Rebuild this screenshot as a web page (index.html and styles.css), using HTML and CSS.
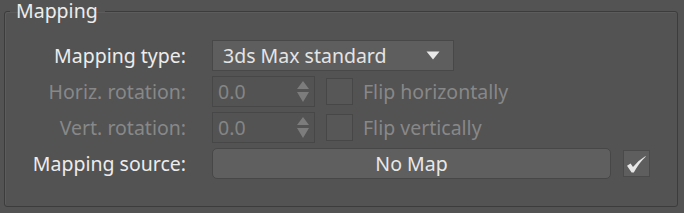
FILE: index.html
```html
<!DOCTYPE html>
<html>
<head>
<meta charset="utf-8">
<link rel="stylesheet" href="styles.css">
</head>
<body>
<fieldset class="group">
  <legend class="group-title">Mapping</legend>
  <div class="form">
    <div class="label">Mapping type:</div>
    <div class="row">
      <div class="dropdown">
        <span class="dropdown-text">3ds Max standard</span>
        <svg class="dropdown-arrow" width="14" height="9" viewBox="0 0 14 9"><path d="M0.5 0.5 H13.5 L7 8.5 Z" fill="#e8e8e8"/></svg>
      </div>
    </div>

    <div class="label disabled">Horiz. rotation:</div>
    <div class="row">
      <div class="spinner">
        <span class="spinner-value">0.0</span>
        <svg class="spinner-arrows" width="12" height="22" viewBox="0 0 12 22"><path d="M6 0 L12 8 H0 Z M0 11 H12 L6 21 Z" fill="#7c7c7c"/></svg>
      </div>
      <div class="checkbox disabled-box"></div>
      <span class="check-label">Flip horizontally</span>
    </div>

    <div class="label disabled">Vert. rotation:</div>
    <div class="row">
      <div class="spinner">
        <span class="spinner-value">0.0</span>
        <svg class="spinner-arrows" width="12" height="22" viewBox="0 0 12 22"><path d="M6 0 L12 8 H0 Z M0 11 H12 L6 21 Z" fill="#7c7c7c"/></svg>
      </div>
      <div class="checkbox disabled-box"></div>
      <span class="check-label">Flip vertically</span>
    </div>

    <div class="label">Mapping source:</div>
    <div class="row">
      <div class="map-button">No Map</div>
      <div class="checkbox checked">
        <svg width="27" height="27" viewBox="0 0 27 27"><path d="M4 15.8 L7.6 13.6 L10 17 Q15 10.5 22.6 6 L22.6 6.8 Q16 13 10.8 22.6 L8.6 22.6 Z" fill="#e6e6e6"/></svg>
      </div>
    </div>
  </div>
</fieldset>
</body>
</html>
```
FILE: styles.css
```css
html, body {
  margin: 0;
  padding: 0;
  background: #535353;
  width: 684px;
  height: 213px;
  overflow: hidden;
}

body {
  font-family: "Noto Sans", "Open Sans", sans-serif;
  font-size: 19.5px;
  color: #e6e6e6;
}

.group {
  margin: 0 6px 0 4px;
  padding: 0 0 27px 0;
  border: 1px solid #3c3c3c;
  border-radius: 3px;
  box-shadow: inset 1px 1px 0 #5c5c5c;
  height: 207px;
  box-sizing: border-box;
}

.group-title {
  margin-left: 5px;
  padding: 0 7px 0 6px;
  line-height: 22px;
  height: 22px;
  color: #ececec;
}

.form {
  display: grid;
  grid-template-columns: 181px 1fr;
  grid-auto-rows: 31px;
  column-gap: 26px;
  row-gap: 5px;
  margin-top: 18px;
}

.label {
  display: flex;
  align-items: center;
  justify-content: flex-end;
  white-space: nowrap;
  color: #ececec;
}

.label.disabled {
  color: #888888;
}

.row {
  display: flex;
  align-items: center;
}

.dropdown {
  width: 242px;
  height: 31px;
  box-sizing: border-box;
  background: #5e5e5e;
  border: 1px solid #484848;
  display: flex;
  align-items: center;
  padding-left: 10px;
  padding-right: 13px;
}

.dropdown-text {
  flex: 1;
  color: #e4e4e4;
}

.dropdown-arrow {
  display: block;
}

.spinner {
  width: 103px;
  height: 31px;
  box-sizing: border-box;
  background: #535353;
  border: 1px solid #474747;
  display: flex;
  align-items: center;
  padding-left: 5px;
  padding-right: 5px;
}

.spinner-value {
  flex: 1;
  color: #858585;
}

.spinner-arrows {
  display: block;
}

.checkbox {
  width: 27px;
  height: 27px;
  box-sizing: border-box;
  border: 1px solid #474747;
  flex: none;
}

.disabled-box {
  background: #575757;
  margin-left: 11px;
}

.check-label {
  margin-left: 10px;
  color: #888888;
  white-space: nowrap;
}

.map-button {
  width: 399px;
  height: 31px;
  box-sizing: border-box;
  background: #5f5f5f;
  border: 1px solid #474747;
  border-radius: 5px;
  display: flex;
  align-items: center;
  justify-content: center;
  color: #e8e8e8;
}

.checked {
  margin-left: 12px;
  background: #5e5e5e;
  border-color: #4a4a4a;
}

.checked svg {
  display: block;
  margin: -1px;
}
```
